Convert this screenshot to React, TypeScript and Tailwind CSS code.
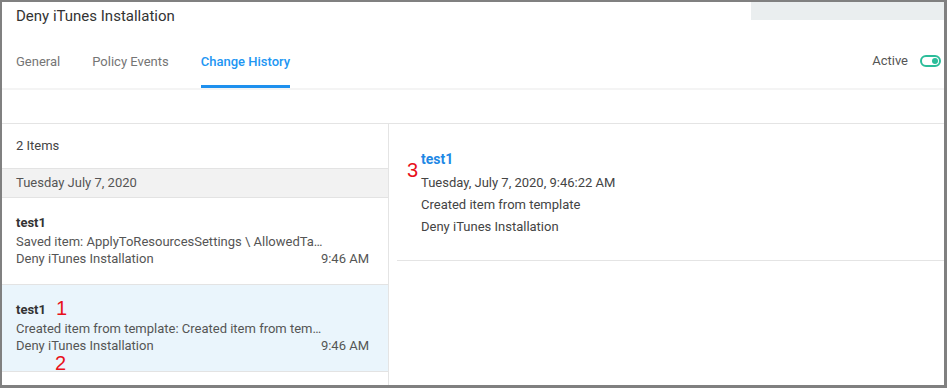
import React from "react";

function Toggle() {
  return (
    <div className="relative w-[21px] h-[12px] rounded-full border-2 border-[#2bbd9a] box-border">
      <div className="absolute right-[1px] top-[1px] w-[6px] h-[6px] rounded-full bg-[#2bbd9a]" />
    </div>
  );
}

function Item({
  title,
  desc,
  name,
  time,
  selected,
}: {
  title: string;
  desc: string;
  name: string;
  time: string;
  selected?: boolean;
}) {
  return (
    <div
      className={
        "h-[87px] border-b border-[#e3e3e3] pl-[14px] pr-[19px] pt-[15px] " +
        (selected ? "bg-[#eaf5fc]" : "bg-white")
      }
    >
      <div className="h-[20px] leading-[20px] text-[13px] font-bold text-[#333]">{title}</div>
      <div className="h-[18px] leading-[18px] text-[13px] text-[#555] whitespace-nowrap">{desc}</div>
      <div className="h-[16px] leading-[16px] text-[13px] text-[#555] flex justify-between">
        <span>{name}</span>
        <span>{time}</span>
      </div>
    </div>
  );
}

export default function App() {
  return (
    <div
      className="relative w-[947px] h-[388px] bg-white border-l-2 border-t-2 border-r-[3px] border-b-[3px] border-[#808080] flex flex-col overflow-hidden"
      style={{ fontFamily: "Roboto, 'Liberation Sans', sans-serif" }}
    >
      {/* Title row */}
      <div className="h-[34px] flex justify-between items-start">
        <div className="pl-[14px] text-[15px] leading-[28px] text-[#333]">Deny iTunes Installation</div>
        <div className="w-[193px] h-[18px] bg-[#eaeeef]" />
      </div>
      {/* Tabs row */}
      <div className="h-[54px] flex items-end justify-between pl-[14px] border-b-2 border-[#f4f4f4]">
        <div className="flex gap-[32px] text-[13px] leading-[16px]">
          <div className="h-[34px] text-[#757575]">General</div>
          <div className="h-[34px] text-[#757575]">Policy Events</div>
          <div className="h-[34px] text-[#2196f3] font-medium border-b-[3px] border-[#1e90ee]">Change History</div>
        </div>
        <div className="h-[35px] flex items-start gap-[12px] pr-[3px]">
          <span className="text-[13px] text-[#555] leading-[16px]">Active</span>
          <div className="mt-[2px]">
            <Toggle />
          </div>
        </div>
      </div>
      {/* blank band */}
      <div className="h-[34px] border-b border-[#e4e4e4]" />
      {/* Body */}
      <div className="flex flex-1 min-h-0">
        <div className="w-[387px] border-r border-[#e4e4e4] flex flex-col">
          <div className="h-[44px] flex items-center pl-[14px] text-[13px] text-[#444]">2 Items</div>
          <div className="h-[30px] bg-[#f2f2f2] border-t border-b border-[#e3e3e3] flex items-center pl-[14px] text-[13px] text-[#555]">
            Tuesday July 7, 2020
          </div>
          <Item
            title="test1"
            desc="Saved item: ApplyToResourcesSettings \ AllowedTa…"
            name="Deny iTunes Installation"
            time="9:46 AM"
          />
          <Item
            title="test1"
            desc="Created item from template: Created item from tem…"
            name="Deny iTunes Installation"
            time="9:46 AM"
            selected
          />
        </div>
        <div className="flex-1 pl-[8px]">
          <div className="pl-[24px] pt-[26px] pb-[22px] border-b border-[#e4e4e4]">
            <div className="h-[22px] leading-[18px] text-[14px] font-bold text-[#1e88e5]">test1</div>
            <div className="h-[22px] leading-[22px] text-[13px] text-[#444]">Tuesday, July 7, 2020, 9:46:22 AM</div>
            <div className="h-[22px] leading-[22px] text-[13px] text-[#444]">Created item from template</div>
            <div className="h-[22px] leading-[22px] text-[13px] text-[#444]">Deny iTunes Installation</div>
          </div>
        </div>
      </div>
      {/* annotations */}
      <span className="absolute left-[54px] top-[296px] text-[20px] leading-[20px] text-[#e8111a]" style={{ fontFamily: "'Liberation Sans', Arial, sans-serif" }}>1</span>
      <span className="absolute left-[53px] top-[351px] text-[20px] leading-[20px] text-[#e8111a]" style={{ fontFamily: "'Liberation Sans', Arial, sans-serif" }}>2</span>
      <span className="absolute left-[405px] top-[158px] text-[20px] leading-[20px] text-[#e8111a]" style={{ fontFamily: "'Liberation Sans', Arial, sans-serif" }}>3</span>
    </div>
  );
}
